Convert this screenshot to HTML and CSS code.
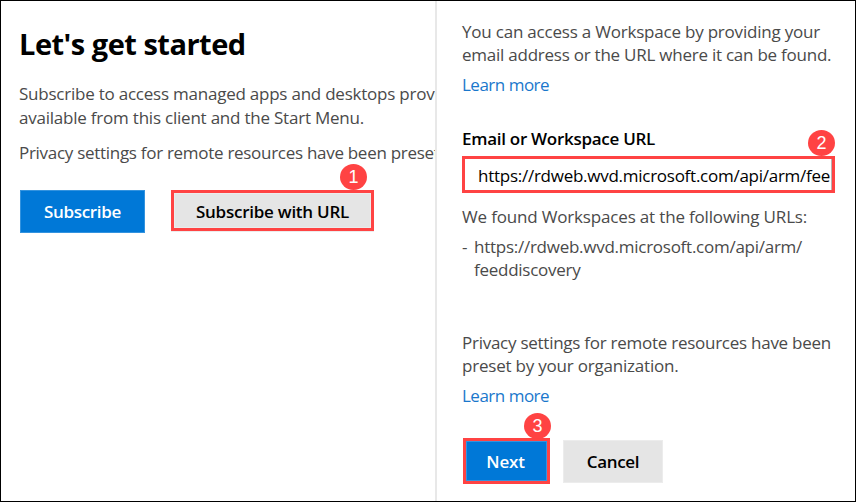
FILE: index.html
```html
<!DOCTYPE html>
<html lang="en">
<head>
<meta charset="utf-8">
<title>Workspaces</title>
<link rel="stylesheet" href="styles.css">
</head>
<body>
<div class="window">
  <main class="start">
    <h1>Let's get started</h1>
    <p class="intro"><span class="w1">Subscribe to access managed apps and desktops prov</span><br><span class="w2">available from this client and the Start Menu.</span></p>
    <p class="policy"><span class="w3">Privacy settings for remote resources have been preset</span></p>
    <div class="actions">
      <button class="btn primary subscribe">Subscribe</button>
      <div class="callout url-callout"><button class="btn">Subscribe with URL</button><span class="badge">1</span></div>
    </div>
  </main>
  <aside class="panel">
    <p class="help"><span class="w4">You can access a Workspace by providing your</span><br><span class="w5">email address or the URL where it can be found.</span></p>
    <a class="link">Learn more</a>
    <div class="label">Email or Workspace URL</div>
    <div class="callout field"><div class="value">https://rdweb.wvd.microsoft.com/api/arm/fee</div><span class="badge">2</span></div>
    <p class="found"><span class="w6">We found Workspaces at the following URLs:</span></p>
    <div class="result"><span class="dash">-</span><span class="w7">https://rdweb.wvd.microsoft.com/api/arm/<br>feeddiscovery</span></div>
    <p class="privacy"><span class="w8">Privacy settings for remote resources have been</span><br><span class="w9">preset by your organization.</span></p>
    <a class="link">Learn more</a>
    <div class="footer">
      <div class="callout next-callout"><button class="btn primary">Next</button><span class="badge">3</span></div>
      <button class="btn cancel">Cancel</button>
    </div>
  </aside>
</div>
</body>
</html>
```

FILE: styles.css
```css
* { box-sizing: border-box; }
body { margin: 0; font-family: "Open Sans", "Noto Sans", sans-serif; font-size: 17px; color: #4a4a4a; }
h1, p { margin: 0; }
p { white-space: nowrap; line-height: 23px; }
.window { width: 856px; height: 502px; border: 1px solid #000; background: #fff; display: flex; overflow: hidden; }
.start { width: 434px; padding: 23px 0 0 18px; overflow: hidden; }
h1 { color: #000; font-size: 29px; line-height: 40px; font-weight: 700; letter-spacing: -0.5px; white-space: nowrap; }
.intro { margin-top: 18px; line-height: 24px; }
.policy { margin-top: 11px; }
.w1 { letter-spacing: -0.23px; }
.w2 { letter-spacing: -0.22px; }
.w3 { letter-spacing: -0.29px; }
.w4 { letter-spacing: -0.21px; }
.w5 { letter-spacing: -0.24px; }
.w6 { letter-spacing: -0.17px; }
.w7 { letter-spacing: -0.26px; }
.w8 { letter-spacing: -0.26px; }
.w9 { letter-spacing: -0.21px; }
.actions { display: flex; margin: 26px 0 0 1px; }
.btn { display: block; width: 100%; height: 100%; padding: 0; border: 1px solid #ececec; background: #e5e5e5; color: #000; font: 600 17px/24px "Open Sans", sans-serif; letter-spacing: -0.35px; white-space: nowrap; }
.primary { background: #0078d7; border-color: #3393df; color: #fff; }
.subscribe { width: 125px; height: 43px; }
.callout { position: relative; border: 3px solid #ff4343; }
.url-callout { width: 203px; height: 41px; margin-left: 26px; box-shadow: 0 1px 0 #ececec; }
.url-callout .btn { letter-spacing: -0.25px; padding-top: 2px; }
.badge { position: absolute; width: 27px; height: 26px; border-radius: 50%; background: #ff4343; color: #fff; font: 18px/26px "Liberation Sans", sans-serif; text-align: center; }
.url-callout .badge { left: 166px; top: -29px; }
.panel { width: 420px; border-left: 2px solid #e8e8e8; padding: 19px 0 0 25px; }
.link { display: block; color: #1a77cc; line-height: 23px; margin-top: 7px; letter-spacing: -0.5px; }
.label { margin-top: 31px; color: #000; font-weight: 600; line-height: 23px; white-space: nowrap; letter-spacing: -0.28px; }
.field { width: 373px; height: 37px; margin-top: 6px; }
.value { padding-left: 13px; line-height: 33px; color: #000; white-space: nowrap; width: 367px; height: 31px; border-right: 1px solid #b5b5b5; letter-spacing: -0.26px; }
.field .badge { left: 343px; top: -29px; }
.found { margin-top: 12px; }
.result { display: flex; margin-top: 7px; line-height: 23px; white-space: nowrap; }
.dash { width: 12px; }
.privacy { margin-top: 50px; }
.footer { display: flex; align-items: center; margin: 31px 0 0 1px; }
.next-callout { width: 87px; height: 46px; }
.next-callout .btn { letter-spacing: -0.2px; padding: 1px 2px 0 0; }
.next-callout .badge { left: 58px; top: -28px; }
.cancel { width: 100px; height: 43px; margin-left: 13px; padding-top: 1px; }
```
